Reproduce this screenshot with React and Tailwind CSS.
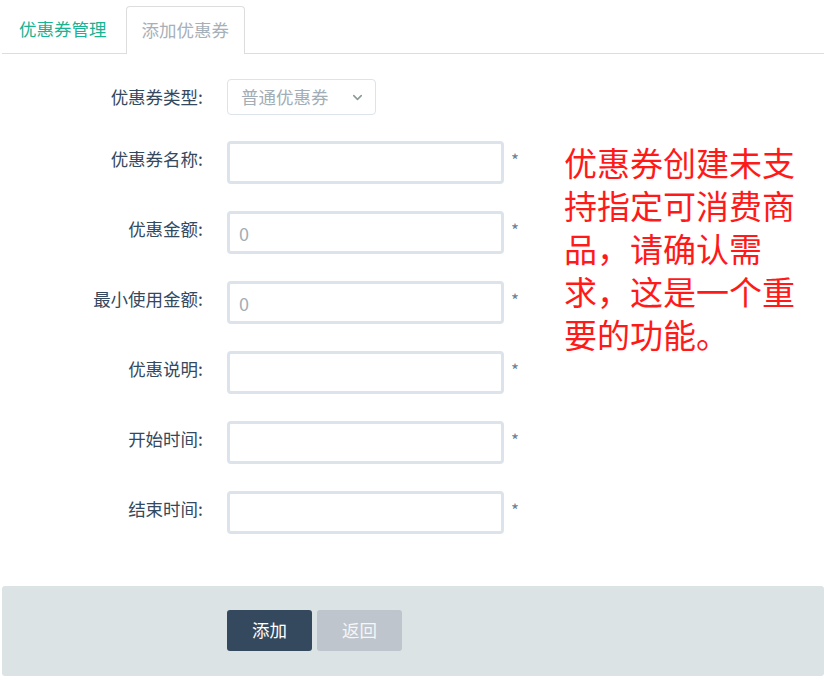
import { ChevronDown } from "lucide-react";

const FIELDS = [
  { label: "优惠券名称:", placeholder: "" },
  { label: "优惠金额:", placeholder: "0" },
  { label: "最小使用金额:", placeholder: "0" },
  { label: "优惠说明:", placeholder: "" },
  { label: "开始时间:", placeholder: "" },
  { label: "结束时间:", placeholder: "" },
];

const font = "font-['Noto_Sans_CJK_SC','Noto_Sans',sans-serif]";

function FieldRow({ label, placeholder }) {
  return <div className="flex items-center">
    <label className="mb-[7px] w-[201px] shrink-0 text-right text-[17.5px] text-[#34495e]">{label}</label>
    <input className="ml-[24px] h-[43px] w-[277px] shrink-0 rounded-[4px] border-[3px] border-[#dde3ea] bg-white px-[9px] text-[18px] text-[#555] outline-none placeholder:text-[#a3adb5]" placeholder={placeholder}/>
    <span className="ml-[7px] -mt-[6px] text-[17px] text-[#6a8196]">*</span>
  </div>;
}

export default function App() {
  return <div className={`${font} min-h-[684px] bg-white pl-[2px]`}>
    <div className="flex h-[54px] items-end border-b border-[#dddddd]">
      <button className="h-[47px] px-[17px] text-[17.5px] text-[#1ab394]">优惠券管理</button>
      <button className="-mb-px ml-[2px] h-[48px] rounded-t-[4px] border border-b-0 border-[#dddddd] bg-white px-[15px] text-[17.5px] text-[#a7b0b8]">添加优惠券</button>
    </div>

    <div className="flex items-start pt-[25px]">
      <div className="flex w-[540px] shrink-0 flex-col">
        <div className="flex items-center">
          <label className="w-[201px] shrink-0 text-right text-[17.5px] text-[#34495e]">优惠券类型:</label>
          <div className="ml-[24px] flex h-[36px] w-[149px] items-center justify-between rounded-[4px] border border-[#dde3ea] pl-[13px] pr-[10px] text-[17.5px] text-[#a3adb5]">
            <span>普通优惠券</span>
            <ChevronDown size={15} strokeWidth={2.5} className="text-[#8c9a9a]"/>
          </div>
        </div>
        <div className="mt-[26px] flex flex-col gap-[27px]">
          {FIELDS.map((field) => <FieldRow key={field.label} {...field}/>)}
        </div>
      </div>
      <p className="ml-[22px] mt-[62px] w-[245px] text-[33px] leading-[43px] text-[#ff1a1a]">优惠券创建未支持指定可消费商品，请确认需求，这是一个重要的功能。</p>
    </div>

    <div className="mt-[52px] flex h-[90px] gap-[5px] rounded-[3px] bg-[#dce3e5] pl-[225px] pt-[24px]">
      <button className="h-[41px] w-[85px] rounded-[3px] bg-[#34495e] text-[17.5px] text-white">添加</button>
      <button className="h-[41px] w-[85px] rounded-[3px] bg-[#bec5cc] text-[17.5px] text-[#f4f6f7]">返回</button>
    </div>
  </div>;
}
